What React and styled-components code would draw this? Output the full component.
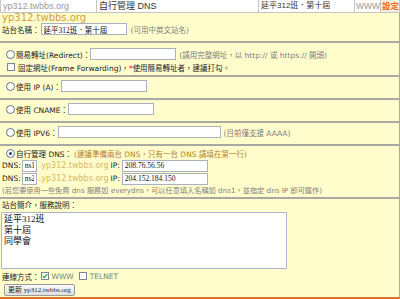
import React from 'react';
import styled, { createGlobalStyle } from 'styled-components';

const GlobalStyle = createGlobalStyle`
  html, body {
    margin: 0;
    padding: 0;
    background: #fff;
  }
  body {
    font-family: "DejaVu Sans", "Noto Sans CJK TC", sans-serif;
    font-size: 7.5px;
    color: #222;
  }
`;

const Page = styled.div`
  width: 400px;
  height: 299px;
  display: flex;
  flex-direction: column;
  overflow: hidden;
`;

const TopBar = styled.div`
  display: flex;
  height: 12px;
  border-bottom: 1px solid #c4c4c4;
  border-left: 1px solid #c4c4c4;
  box-sizing: content-box;
`;

const TopCell = styled.div`
  width: ${(p) => p.$w}px;
  flex: none;
  box-sizing: border-box;
  padding-left: ${(p) => (p.$pl === undefined ? 2 : p.$pl)}px;
  border-right: 1px solid #c4c4c4;
  background: ${(p) => p.$bg || '#fff'};
  color: ${(p) => p.$color || '#333'};
  font-family: "Liberation Sans", "Noto Sans CJK TC", sans-serif;
  font-size: ${(p) => p.$fs || 9}px;
  font-weight: ${(p) => (p.$bold ? 700 : 400)};
  line-height: 12px;
  white-space: nowrap;
  overflow: hidden;
`;

const Body = styled.div`
  flex: 1;
  background: #fffdcc;
  border-right: 1px solid #a8a8a8;
  border-bottom: 2px solid #e0742c;
  padding-left: 1px;
  display: flex;
  flex-direction: column;
`;

const Head = styled.div`
  padding-bottom: 5px;
`;

const Title = styled.div`
  padding-left: 1px;
  color: #d2a040;
  font-size: 10px;
  line-height: 9px;
  height: 9px;
`;

const Section = styled.div`
  border-top: 2px solid #a9a9a3;
  margin-left: -1px;
  padding: ${(p) => p.$pt || 0}px 0 ${(p) => p.$pb || 0}px 1px;
`;

const Row = styled.div`
  display: flex;
  align-items: center;
  height: ${(p) => p.$h}px;
  padding-left: 1px;
  white-space: nowrap;
`;

const Text = styled.span`
  color: ${(p) => p.$color || '#222'};
  margin-left: ${(p) => p.$ml || 0}px;
`;

const Hint = styled.span`
  color: #808080;
  margin-left: ${(p) => p.$ml || 0}px;
  font-size: ${(p) => p.$fs || 7.5}px;
`;

const Star = styled.span`
  color: #e00;
`;

const Field = styled.input`
  width: ${(p) => p.$w}px;
  height: 12px;
  box-sizing: border-box;
  margin: 0 0 0 ${(p) => p.$ml || 0}px;
  padding: 0 2px;
  border: 1px solid #a9b3bf;
  background: #fff;
  color: #111;
  font-family: "Liberation Serif", "Noto Sans CJK TC", serif;
  font-size: 7.5px;
  outline: none;
  flex: none;
`;

const RadioDot = styled.span`
  width: 7px;
  height: 7px;
  margin: 0 1px 0 4px;
  border: 1px solid #5f7392;
  border-radius: 50%;
  background: #fff;
  flex: none;
  display: flex;
  align-items: center;
  justify-content: center;
  &::after {
    content: '';
    width: 3px;
    height: 3px;
    border-radius: 50%;
    background: ${(p) => (p.$on ? '#23417a' : 'transparent')};
  }
`;

const Box = styled.span`
  width: 6px;
  height: 6px;
  margin: 0 ${(p) => p.$mr || 3}px 0 ${(p) => p.$ml || 0}px;
  border: 1px solid #7d8790;
  background: #fff;
  flex: none;
  display: flex;
  align-items: center;
  justify-content: center;
`;

const Note = styled.span`
  color: #b57d2c;
  margin-left: 2px;
`;

const Suffix = styled.span`
  color: #d8b865;
  margin-left: 2px;
  font-size: 8px;
`;

const Memo = styled.textarea`
  width: 286px;
  height: 57px;
  box-sizing: border-box;
  margin: 3px 0 0 0;
  padding: 1px 2px;
  border: 1px solid #a9b8cc;
  background: #fff;
  color: #111;
  font-family: "Liberation Serif", "Noto Sans CJK TC", serif;
  font-size: 9px;
  line-height: 11px;
  resize: none;
  outline: none;
  display: block;
`;

const Submit = styled.button`
  height: 12px;
  margin: 0 0 0 2px;
  padding: 0 3px;
  border: 1px solid #9a9a9a;
  border-radius: 2px;
  background: linear-gradient(#fbfbfb, #dedede);
  color: #222;
  font-family: "Liberation Serif", "Noto Sans CJK TC", serif;
  font-size: 7px;
  line-height: 10px;
  cursor: pointer;
`;

const Tick = () => (
  <svg width="6" height="6" viewBox="0 0 6 6">
    <path d="M0.8 3.1 L2.3 4.6 L5.2 1.1" fill="none" stroke="#2a9a2a" strokeWidth="1.2" />
  </svg>
);

const App = () => {
  return (
    <Page>
      <GlobalStyle />
      <TopBar>
        <TopCell $w={96} $color="#9a9a9a">yp312.twbbs.org</TopCell>
        <TopCell $w={162}>自行管理 DNS</TopCell>
        <TopCell $w={96} $fs={8}>延平312班．第十屆</TopCell>
        <TopCell $w={26} $color="#9a9a9a" $fs={8.5} $pl={1}>WWW</TopCell>
        <TopCell $w={19} $color="#f26a10" $bg="#f4efe4" $fs={8.5} $pl={1} $bold>設定</TopCell>
      </TopBar>

      <Body>
        <Head>
          <Title>yp312.twbbs.org</Title>
          <Row $h={14}>
            <Text>站台名稱：</Text>
            <Field $w={86} $ml={1} defaultValue="延平312班．第十屆" />
            <Hint $ml={4}>(可用中英文站名)</Hint>
          </Row>
        </Head>

        <Section $pt={4} $pb={2}>
          <Row $h={14}>
            <RadioDot />
            <Text>簡易轉址(Redirect)：</Text>
            <Field $w={86} />
            <Hint $ml={3}>(請用完整網址，以 http:// 或 https:// 開頭)</Hint>
          </Row>
          <Row $h={12}>
            <Box $ml={5} />
            <Text>
              固定網址(Frame Forwarding)，<Star>*</Star>使用簡易轉址者，建議打勾。
            </Text>
          </Row>
        </Section>

        <Section $pt={2} $pb={5}>
          <Row $h={14}>
            <RadioDot />
            <Text>使用 IP (A)：</Text>
            <Field $w={86} />
          </Row>
        </Section>

        <Section $pt={2} $pb={5}>
          <Row $h={14}>
            <RadioDot />
            <Text>使用 CNAME：</Text>
            <Field $w={86} />
          </Row>
        </Section>

        <Section $pt={2} $pb={5}>
          <Row $h={14}>
            <RadioDot />
            <Text>使用 IPV6：</Text>
            <Field $w={163} />
            <Hint $ml={3}>(目前僅支援 AAAA)</Hint>
          </Row>
        </Section>

        <Section $pt={1} $pb={2}>
          <Row $h={12}>
            <RadioDot $on />
            <Text>自行管理 DNS：</Text>
            <Note>(建議準備兩台 DNS，只有一台 DNS 請填在第一行)</Note>
          </Row>
          <Row $h={13}>
            <Text>DNS:</Text>
            <Field $w={15} $ml={1} defaultValue="ns1" />
            <Suffix>.yp312.twbbs.org</Suffix>
            <Text $ml={2}>IP:</Text>
            <Field $w={86} $ml={2} defaultValue="208.76.56.56" />
          </Row>
          <Row $h={13}>
            <Text>DNS:</Text>
            <Field $w={15} $ml={1} defaultValue="ns2" />
            <Suffix>.yp312.twbbs.org</Suffix>
            <Text $ml={2}>IP:</Text>
            <Field $w={86} $ml={2} defaultValue="204.152.184.150" />
          </Row>
          <Row $h={10}>
            <Hint $fs={7.2}>
              (若您要使用一些免費 dns 服務如 everydns，可以任意填入名稱如 dns1，並指定 dns IP 即可運作)
            </Hint>
          </Row>
        </Section>

        <Section>
          <Row $h={10}>
            <Text>站台簡介，服務說明：</Text>
          </Row>
          <Memo defaultValue={'延平312班\n第十屆\n同學會'} />
          <Row $h={14}>
            <Text>連線方式：</Text>
            <Box $ml={1}>
              <Tick />
            </Box>
            <Hint>WWW</Hint>
            <Box $ml={5} />
            <Hint>TELNET</Hint>
          </Row>
          <Row $h={13}>
            <Submit type="button">更新 yp312.twbbs.org</Submit>
          </Row>
        </Section>
      </Body>
    </Page>
  );
};

export default App;
